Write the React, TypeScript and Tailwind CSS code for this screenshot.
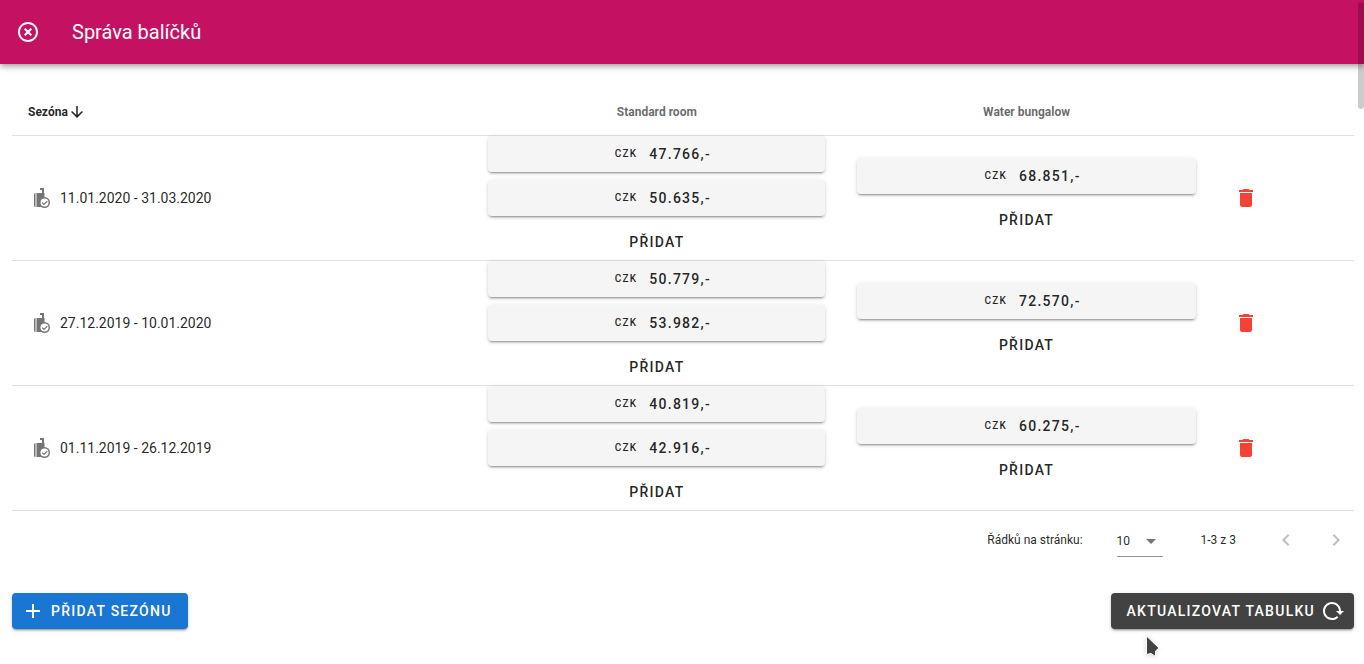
import React from "react";

const icons = {
  closeCircle:
    "M12,20C7.59,20 4,16.41 4,12C4,7.59 7.59,4 12,4C16.41,4 20,7.59 20,12C20,16.41 16.41,20 12,20M12,2C6.47,2 2,6.47 2,12C2,17.53 6.47,22 12,22C17.53,22 22,17.53 22,12C22,6.47 17.53,2 12,2M14.59,8L12,10.59L9.41,8L8,9.41L10.59,12L8,14.59L9.41,16L12,13.41L14.59,16L16,14.59L13.41,12L16,9.41L14.59,8Z",
  arrowDown:
    "M11,4H13V16L18.5,10.5L19.92,11.92L12,19.84L4.08,11.92L5.5,10.5L11,16V4Z",
  delete:
    "M19,4H15.5L14.5,3H9.5L8.5,4H5V6H19M6,19A2,2 0 0,0 8,21H16A2,2 0 0,0 18,19V7H6V19Z",
  menuDown: "M7,10L12,15L17,10H7Z",
  chevronLeft: "M15.41,16.58L10.83,12L15.41,7.41L14,6L8,12L14,18L15.41,16.58Z",
  chevronRight: "M8.59,16.58L13.17,12L8.59,7.41L10,6L16,12L10,18L8.59,16.58Z",
  plus: "M19,13H13V19H11V13H5V11H11V5H13V11H19V13Z",
  reload:
    "M2,12C2,16.97 6.03,21 11,21C13.39,21 15.68,20.06 17.4,18.4L15.9,16.9C14.63,18.25 12.86,19 11,19C4.76,19 1.64,11.46 6.05,7.05C10.46,2.64 18,5.77 18,12H15L19,16H19.1L23,12H20C20,7.03 15.97,3 11,3C6.03,3 2,7.03 2,12Z",
};

const elevation =
  "shadow-[0_3px_1px_-2px_rgba(0,0,0,0.2),0_2px_2px_0_rgba(0,0,0,0.14),0_1px_5px_0_rgba(0,0,0,0.12)]";
const buttonText = "text-sm font-medium uppercase tracking-[0.09em]";
const cellBorder = "border-b border-black/12";

const seasons = [
  {
    range: "11.01.2020 - 31.03.2020",
    prices: [["47.766,-", "50.635,-"], ["68.851,-"]],
  },
  {
    range: "27.12.2019 - 10.01.2020",
    prices: [["50.779,-", "53.982,-"], ["72.570,-"]],
  },
  {
    range: "01.11.2019 - 26.12.2019",
    prices: [["40.819,-", "42.916,-"], ["60.275,-"]],
  },
];

function Icon({ name, className = "size-6" }: { name: keyof typeof icons; className?: string }) {
  return (
    <svg viewBox="0 0 24 24" fill="currentColor" aria-hidden="true" className={`shrink-0 ${className}`}>
      <path d={icons[name]} />
    </svg>
  );
}

function BagCheckIcon() {
  return (
    <svg viewBox="0 0 24 24" fill="currentColor" aria-hidden="true" className="size-6 shrink-0 text-[#757575]">
      <path d="M10,2H14V7H14.5V21H6.5V7H12V4H10V2Z" />
      <path d="M5.5,7V21A1.5,1.5 0 0,1 4,19.5V8.5A1.5,1.5 0 0,1 5.5,7Z" />
      <circle cx="14.5" cy="16.5" r="5.5" />
      <circle cx="14.5" cy="16.5" r="4" fill="#fff" />
      <path d="M12.2,16.6L14,18.4L17.3,15.1" fill="none" stroke="currentColor" strokeWidth="1.3" />
    </svg>
  );
}

function PriceCell({ prices }: { prices: string[] }) {
  return (
    <td className={`px-4 py-0 ${cellBorder}`}>
      <div className="flex flex-col gap-2">
        {prices.map((price) => (
          <button
            key={price}
            type="button"
            className={`flex h-9 w-full items-center justify-center rounded bg-[#f5f5f5] ${buttonText} ${elevation}`}
          >
            <span className="mx-3 text-[10px] leading-5 tracking-[0.125em]">CZK</span>
            {price}
          </button>
        ))}
        <button type="button" className={`h-9 w-full rounded ${buttonText}`}>
          Přidat
        </button>
      </div>
    </td>
  );
}

function SeasonTable() {
  return (
    <table className="w-full table-fixed border-separate border-spacing-0">
      <colgroup>
        <col className="w-[34.3%]" />
        <col className="w-[27.5%]" />
        <col className="w-[27.6%]" />
        <col />
      </colgroup>
      <thead>
        <tr className="h-12 text-xs text-black/60">
          <th scope="col" aria-sort="descending" className={`px-4 py-0 text-left font-bold text-black/87 ${cellBorder}`}>
            <button type="button" className="flex items-center">
              Sezóna
              <Icon name="arrowDown" className="size-[18px]" />
            </button>
          </th>
          <th scope="col" className={`px-4 py-0 font-bold ${cellBorder}`}>Standard room</th>
          <th scope="col" className={`px-4 py-0 font-bold ${cellBorder}`}>Water bungalow</th>
          <td className={cellBorder} />
        </tr>
      </thead>
      <tbody>
        {seasons.map((season) => (
          <tr key={season.range}>
            <td className={`px-4 py-0 ${cellBorder}`}>
              <div className="flex items-center gap-1.5 pl-0.5 text-sm">
                <BagCheckIcon />
                {season.range}
              </div>
            </td>
            {season.prices.map((prices, index) => (
              <PriceCell key={index} prices={prices} />
            ))}
            <td className={`px-4 py-0 ${cellBorder}`}>
              <button
                type="button"
                aria-label="Smazat"
                className="flex size-9 items-center justify-center rounded-full text-[#f44336]"
              >
                <Icon name="delete" />
              </button>
            </td>
          </tr>
        ))}
      </tbody>
    </table>
  );
}

function Pagination() {
  return (
    <div className="flex h-[58px] items-center justify-end text-xs">
      <label htmlFor="per-page">Řádků na stránku:</label>
      <div className="relative mr-[38px] mb-3 ml-[34px] flex h-8 w-[46px] items-center self-end border-b border-black/42">
        <select id="per-page" defaultValue="10" className="h-full w-full appearance-none bg-transparent outline-none">
          <option value="5">5</option>
          <option value="10">10</option>
          <option value="15">15</option>
        </select>
        <Icon name="menuDown" className="pointer-events-none absolute right-0 size-6 text-black/54" />
      </div>
      <span className="mr-8">1-3 z 3</span>
      <div className="flex gap-3.5 text-black/26">
        <button type="button" disabled aria-label="Předchozí stránka" className="flex size-9 items-center justify-center">
          <Icon name="chevronLeft" />
        </button>
        <button type="button" disabled aria-label="Další stránka" className="flex size-9 items-center justify-center">
          <Icon name="chevronRight" />
        </button>
      </div>
    </div>
  );
}

export default function App() {
  return (
    <div className="relative min-h-screen bg-white font-[Roboto,sans-serif] text-black/87">
      <header className="flex h-16 items-center gap-8 bg-[#c51162] px-4 text-white shadow-[0_2px_4px_-1px_rgba(0,0,0,0.2),0_4px_5px_0_rgba(0,0,0,0.14),0_1px_10px_0_rgba(0,0,0,0.12)]">
        <button type="button" aria-label="Zavřít">
          <Icon name="closeCircle" />
        </button>
        <h1 className="text-xl">Správa balíčků</h1>
      </header>

      <main className="pt-6 pr-2.5 pl-3">
        <SeasonTable />
        <Pagination />
        <div className="mt-6 flex items-center justify-between text-white">
          <button
            type="button"
            className={`flex h-9 items-center gap-1.5 rounded bg-[#1976d2] pr-4 pl-[9px] ${buttonText} ${elevation}`}
          >
            <Icon name="plus" />
            Přidat sezónu
          </button>
          <button
            type="button"
            className={`flex h-9 items-center gap-1.5 rounded bg-[#424242] pr-[9px] pl-4 ${buttonText} ${elevation}`}
          >
            Aktualizovat tabulku
            <Icon name="reload" />
          </button>
        </div>
      </main>

      {/* overlay scrollbar thumb */}
      <div className="absolute top-0.5 right-0 h-[107px] w-1.5 rounded-full bg-black/20" />
      {/* pointer */}
      <svg
        viewBox="0 0 16 22"
        aria-hidden="true"
        className="pointer-events-none absolute top-[635px] left-[1145px] h-[22px] w-4 drop-shadow-sm"
      >
        <path d="M1.5,1V19.5L6,18.5L10.5,21.5V16L14,13Z" fill="#424242" stroke="#fff" strokeWidth="1" />
      </svg>
    </div>
  );
}
